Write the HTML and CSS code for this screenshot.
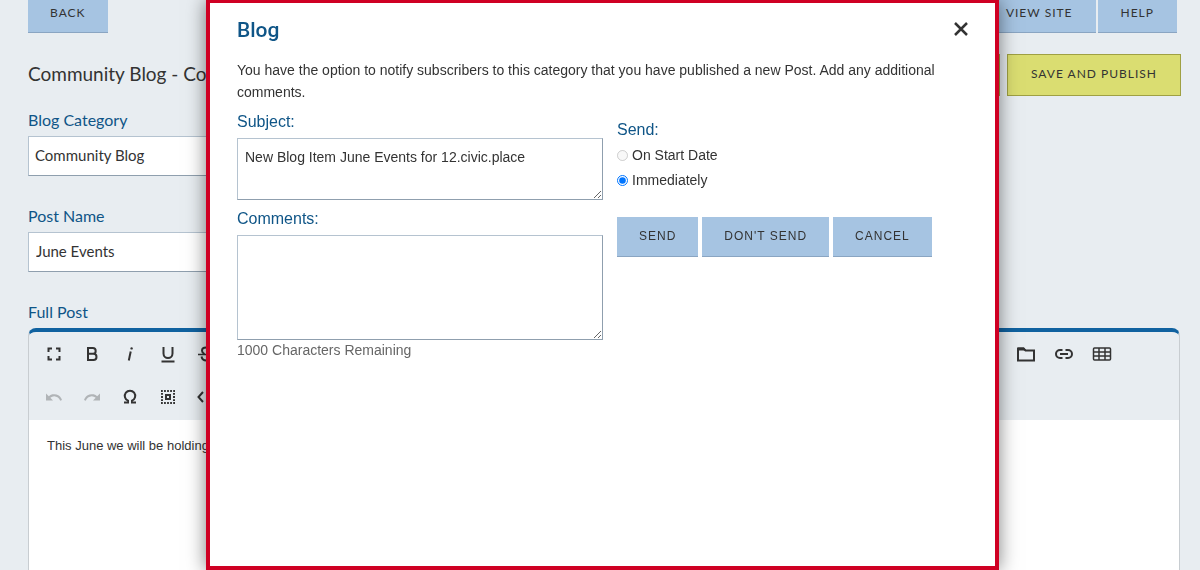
FILE: index.html
```html
<!DOCTYPE html>
<html lang="en">
<head>
    <meta charset="UTF-8">
    <meta name="viewport" content="width=device-width, initial-scale=1.0">
    <title>Community Blog</title>
    <link rel="stylesheet" href="styles.css">
</head>
<body>
    <div class="page">
        <div class="top-bar">
            <button type="button" class="btn btn-top">Back</button>
            <div class="top-actions">
                <button type="button" class="btn btn-top">View Site</button>
                <button type="button" class="btn btn-top">Help</button>
            </div>
        </div>

        <div class="title-row">
            <h1>Community Blog - Co</h1>
            <div class="save-actions">
                <button type="button" class="btn btn-save">Save</button>
                <button type="button" class="btn btn-save">Save and Publish</button>
            </div>
        </div>

        <div class="field">
            <label for="category">Blog Category</label>
            <select id="category">
                <option>Community Blog</option>
            </select>
        </div>
        <div class="field">
            <label for="postName">Post Name</label>
            <input type="text" id="postName" value="June Events">
        </div>

        <div class="editor-label">Full Post</div>
        <div class="editor">
            <div class="toolbar">
                <div class="tool-row">
                    <div class="tool-group">
                        <button type="button" aria-label="Fullscreen"><svg viewBox="0 0 18 18"><path d="M3.500 7V3.500H7M11 3.500h3.500V7M14.500 11v3.500H11M7 14.500H3.500V11" class="line"/></svg></button>
                        <button type="button" aria-label="Bold"><svg viewBox="0 0 18 18"><path d="M5 3h4.800a2.900 2.900 0 0 1 0 5.800H5zM5 8.800h5.400a3.100 3.100 0 0 1 0 6.200H5z" class="line"/></svg></button>
                        <button type="button" aria-label="Italic"><svg viewBox="0 0 18 18"><path d="M9.700 6.500L7.800 15.500" class="line"/><circle cx="10.600" cy="3.400" r="1.200"/></svg></button>
                        <button type="button" aria-label="Underline"><svg viewBox="0 0 18 18"><path d="M4.500 2v6.500a4.500 4.500 0 0 0 9 0V2M2.500 16.500h13" class="line"/></svg></button>
                        <button type="button" aria-label="Strikethrough"><svg viewBox="0 0 18 18"><path d="M13.500 5.500C13 3.500 11.500 2.500 9.200 2.500 6.700 2.500 5 3.800 5 5.700c0 1.400 1 2.400 2.500 3.300M4.500 11.500c.5 2.500 2.300 4 4.700 4 2.800 0 4.500-1.400 4.500-3.500 0-1-.3-1.800-1-2.500" class="line"/><path d="M1 9.500h16" class="line thin"/></svg></button>
                    </div>
                    <div class="tool-group">
                        <button type="button" aria-label="Insert file"><svg viewBox="0 0 20 18"><path d="M2 3.500h5.500l2 2H18v10H2z" class="line"/><path d="M2 2.500h6l2.500 3H2z"/></svg></button>
                        <button type="button" aria-label="Insert link"><svg viewBox="0 0 20 18"><path d="M8.500 5H6a4 4 0 0 0 0 8h2.500M11.500 5H14a4 4 0 0 1 0 8h-2.500M6 9h8" class="line"/></svg></button>
                        <button type="button" aria-label="Insert table"><svg viewBox="0 0 20 18"><rect x="1.500" y="3" width="17" height="12" rx="1" class="line thin"/><path d="M1.500 7h17M1.500 11h17M7 3v12M13 3v12" class="line thin"/></svg></button>
                    </div>
                </div>
                <div class="tool-row">
                    <div class="tool-group">
                        <button type="button" aria-label="Undo" disabled><svg viewBox="0 0 18 18"><path d="M1 5.500v7h7L5.300 9.800a6.200 6.200 0 0 1 9.900 3l1.800-.7A8 8 0 0 0 3.800 8.300z"/></svg></button>
                        <button type="button" aria-label="Redo" disabled><svg viewBox="0 0 18 18"><path d="M17 5.500v7h-7l2.700-2.700a6.200 6.200 0 0 0-9.900 3L1 12.100a8 8 0 0 1 13.200-3.800z"/></svg></button>
                        <button type="button" aria-label="Special character"><svg viewBox="0 0 18 18"><path d="M3 14.500h4v-1.800A5.200 5.200 0 1 1 11 12.700v1.800h4" class="line"/></svg></button>
                        <button type="button" aria-label="Select all"><svg viewBox="0 0 18 18"><path d="M2 3h14M2 15h14M3 5.050v8M15 5.050v8" class="line dotted"/><rect x="7" y="7" width="4" height="4" class="line"/></svg></button>
                        <button type="button" aria-label="Code view"><svg viewBox="0 0 18 18"><path d="M6 4L1.500 9 6 14M12 4l4.500 5-4.500 5" class="line"/></svg></button>
                    </div>
                </div>
            </div>
            <div class="editor-body">This June we will be holding</div>
        </div>
    </div>

    <div class="overlay">
        <div class="modal" role="dialog" aria-labelledby="modalTitle">
            <div class="modal-head">
                <h2 id="modalTitle">Blog</h2>
                <button type="button" class="close" aria-label="Close"><svg viewBox="0 0 16 16"><path d="M2 2l12 12M14 2L2 14"/></svg></button>
            </div>
            <p class="intro">You have the option to notify subscribers to this category that you have published a new Post. Add any additional comments.</p>
            <div class="columns">
                <div class="message">
                    <label for="subject">Subject:</label>
                    <textarea id="subject" class="subject">New Blog Item June Events for 12.civic.place</textarea>
                    <label for="comments">Comments:</label>
                    <textarea id="comments" class="comments"></textarea>
                    <div class="remaining">1000 Characters Remaining</div>
                </div>
                <div class="send">
                    <div class="send-title">Send:</div>
                    <label class="radio"><input type="radio" name="send" disabled> On Start Date</label>
                    <label class="radio"><input type="radio" name="send" checked> Immediately</label>
                    <div class="send-buttons">
                        <button type="button" class="btn btn-modal">Send</button>
                        <button type="button" class="btn btn-modal">Don't Send</button>
                        <button type="button" class="btn btn-modal">Cancel</button>
                    </div>
                </div>
            </div>
        </div>
    </div>
</body>
</html>
```

FILE: styles.css
```css
* {
    margin: 0;
    padding: 0;
    box-sizing: border-box;
}

body {
    font-family: Lato, sans-serif;
    font-size: 16px;
    background: #e8edf1;
    color: #333;
    height: 100vh;
    overflow: hidden;
}

button,
input,
select,
textarea {
    font-family: inherit;
    color: inherit;
}

.page {
    height: 100vh;
    padding: 0 20px 0 28px;
    display: flex;
    flex-direction: column;
}

/* Buttons */
.btn {
    background: #a6c4e2;
    border: 0;
    border-bottom: 1px solid #8aa5c2;
    font-size: 12px;
    line-height: 16px;
    letter-spacing: 1px;
    text-transform: uppercase;
    cursor: pointer;
}

.btn-top {
    padding: 5px 22px 11px;
}

.top-actions .btn-top {
    padding-left: 23px;
    padding-right: 23px;
}

.btn-save {
    padding: 11px 23px 13px;
    background: #dadd71;
    border: 1px solid #9fa043;
}

.btn-modal {
    padding: 11px 22px 12px;
}

.top-bar,
.title-row {
    display: flex;
    justify-content: space-between;
}

.top-actions {
    display: flex;
    gap: 2px;
    padding-right: 3px;
}

.title-row {
    align-items: flex-start;
    margin: 21px -1px 15px 0;
}

.save-actions {
    display: flex;
    gap: 7px;
}

h1 {
    font-size: 19px;
    line-height: 40px;
    font-weight: 400;
}

/* Post form */
.field {
    display: flex;
    flex-direction: column;
    margin-bottom: 31px;
}

.field label,
.editor-label {
    color: #0f5587;
    line-height: 18px;
    margin-bottom: 7px;
}

.field input,
.field select {
    width: 50%;
    height: 40px;
    padding: 0 7px 2px;
    font-size: 15px;
    background: #fff;
    border: 1px solid #b5c3d0;
    border-bottom-color: #8f9fae;
    border-radius: 0;
    appearance: none;
}

.field select {
    padding-left: 6px;
}

/* Editor */
.editor {
    flex: 1;
    display: flex;
    flex-direction: column;
    border: 1px solid #c8cdd1;
    border-top: 4px solid #1062a0;
    border-bottom: 0;
    border-radius: 8px 8px 0 0;
    overflow: hidden;
}

.toolbar {
    padding: 0 58px 2px 6px;
}

.tool-row {
    display: flex;
    justify-content: space-between;
}

.tool-group {
    display: flex;
}

.tool-group button {
    width: 38px;
    height: 43px;
    display: flex;
    align-items: center;
    justify-content: center;
    background: none;
    border: 0;
}

.tool-group button:disabled {
    opacity: 0.3;
}

.tool-group svg {
    height: 18px;
    fill: #333;
}

.tool-group .line {
    fill: none;
    stroke: #333;
    stroke-width: 2;
}

.tool-group .thin {
    stroke-width: 1.5;
}

.tool-group .dotted {
    stroke-dasharray: 1.8 1.25;
}

.editor-body {
    flex: 1;
    padding: 16px 18px;
    background: #fff;
    font-family: "Liberation Sans", Arial, sans-serif;
    font-size: 13px;
    line-height: 20px;
}

/* Notification dialog */
.overlay {
    position: fixed;
    inset: 0;
    display: flex;
    justify-content: center;
    padding-left: 5px;
}

.modal {
    width: 793px;
    max-width: 100%;
    padding: 14px 27px;
    background: #fff;
    border: 4px solid #cf0023;
    border-top-width: 3px;
    box-shadow: 0 0 18px rgba(0, 0, 0, 0.5);
    font-family: "Liberation Sans", Arial, sans-serif;
    font-size: 14px;
    line-height: 22px;
}

.modal-head {
    display: flex;
    align-items: flex-start;
    justify-content: space-between;
    margin-bottom: 16px;
}

h2 {
    font-family: Roboto, sans-serif;
    font-size: 21px;
    line-height: 26px;
    font-weight: 500;
    color: #0f5587;
}

.close {
    width: 16px;
    margin: 4px -1px 0 0;
    background: none;
    border: 0;
    cursor: pointer;
}

.close svg {
    display: block;
    fill: none;
    stroke: #333;
    stroke-width: 2.5;
}

.intro {
    margin-bottom: 8px;
}

.columns {
    display: flex;
    gap: 14px;
}

.message {
    width: 366px;
    display: flex;
    flex-direction: column;
}

.message label,
.send-title {
    font-size: 16px;
    line-height: 22px;
    color: #0f5587;
}

textarea {
    display: block;
    width: 100%;
    padding: 7px;
    font-size: 14px;
    line-height: 22px;
    border: 1px solid #b5c3d0;
    border-right-color: #8f9fae;
    border-bottom-color: #8f9fae;
    resize: both;
}

.subject {
    height: 62px;
    margin: 5px 0 8px;
}

.comments {
    height: 105px;
    margin-top: 5px;
}

.remaining {
    line-height: 20px;
    color: #666;
}

.send-title {
    margin: 8px 0 2px;
}

.radio {
    display: flex;
    align-items: center;
    gap: 4px;
    line-height: 25px;
}

.radio input {
    width: 11px;
    height: 11px;
}

.send-buttons {
    display: flex;
    gap: 4px;
    margin-top: 24px;
}
```
